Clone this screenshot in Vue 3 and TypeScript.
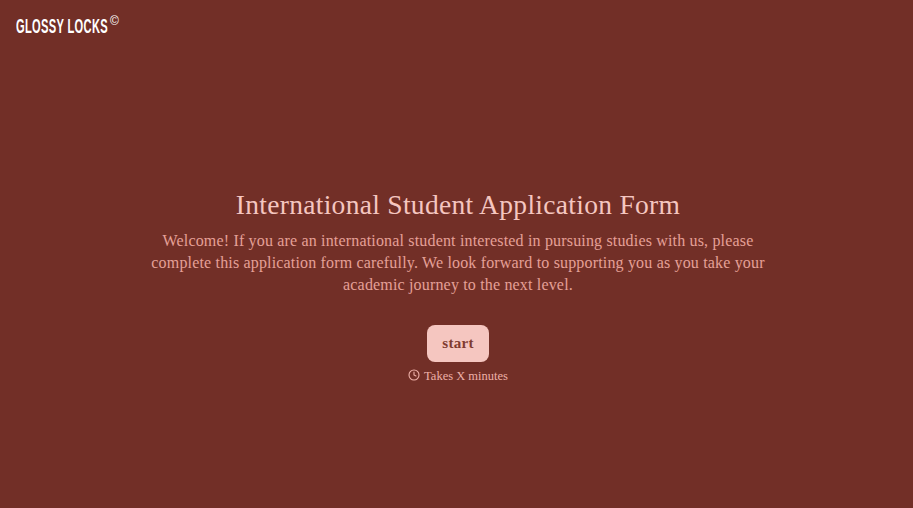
<script setup lang="ts">
const title = 'International Student Application Form'
</script>

<template>
  <div class="page">
    <header class="header">
      <span class="logo-box"><span class="logo">GLOSSY LOCKS</span></span><sup class="mark">©</sup>
    </header>
    <main class="main">
      <h1 class="title">{{ title }}</h1>
      <p class="intro">Welcome! If you are an international student interested in pursuing studies with us, please complete this application form carefully. We look forward to supporting you as you take your academic journey to the next level.</p>
      <button class="start" type="button">start</button>
      <div class="time">
        <svg class="clock" viewBox="0 0 24 24" width="12" height="12" fill="none" stroke="currentColor" stroke-width="2.2" stroke-linecap="round" stroke-linejoin="round">
          <circle cx="12" cy="12" r="10" />
          <path d="M12 6v6l4 2" />
        </svg>
        <span>Takes X minutes</span>
      </div>
    </main>
  </div>
</template>

<style>
html, body { margin: 0; background: #722f27; }
</style>

<style scoped>
.page {
  height: 508px;
  overflow: hidden;
  display: flex;
  flex-direction: column;
  background: #722f27;
  font-family: "Liberation Serif", serif;
}
.header {
  display: flex;
  align-items: flex-start;
  height: 43px;
  box-sizing: border-box;
  padding: 15px 16px 0;
  color: #fff;
}
.logo-box {
  display: block;
  width: 92px;
  height: 22px;
}
.logo {
  display: inline-block;
  font-family: "Liberation Sans", sans-serif;
  font-weight: 700;
  font-size: 21px;
  line-height: 22px;
  letter-spacing: 0.6px;
  white-space: nowrap;
  transform: scaleX(0.53);
  transform-origin: left center;
}
.mark {
  font-family: "Liberation Sans", sans-serif;
  font-size: 12px;
  line-height: 12px;
  margin: 0 0 0 2px;
}
.main {
  display: flex;
  flex-direction: column;
  align-items: center;
  padding: 146px 0 0 3px;
}
.title {
  margin: 0;
  font-size: 27.5px;
  line-height: 32px;
  letter-spacing: 0.3px;
  font-weight: 400;
  white-space: nowrap;
  color: #f5c6c0;
}
.intro {
  width: 640px;
  margin: 9px 0 0;
  font-size: 16px;
  line-height: 22px;
  letter-spacing: 0.17px;
  text-align: center;
  color: #e5a097;
}
.start {
  margin-top: 29px;
  width: 62px;
  height: 37px;
  border: 0;
  border-radius: 8px;
  background: #f5c6c0;
  color: #7f3b30;
  font-family: inherit;
  font-size: 15px;
  letter-spacing: 0.3px;
  font-weight: 700;
}
.time {
  display: flex;
  align-items: center;
  gap: 4px;
  margin-top: 6px;
  font-size: 12.5px;
  line-height: 16px;
  color: #eeb0a8;
}
.clock { display: block; margin-top: -3px; }
</style>
